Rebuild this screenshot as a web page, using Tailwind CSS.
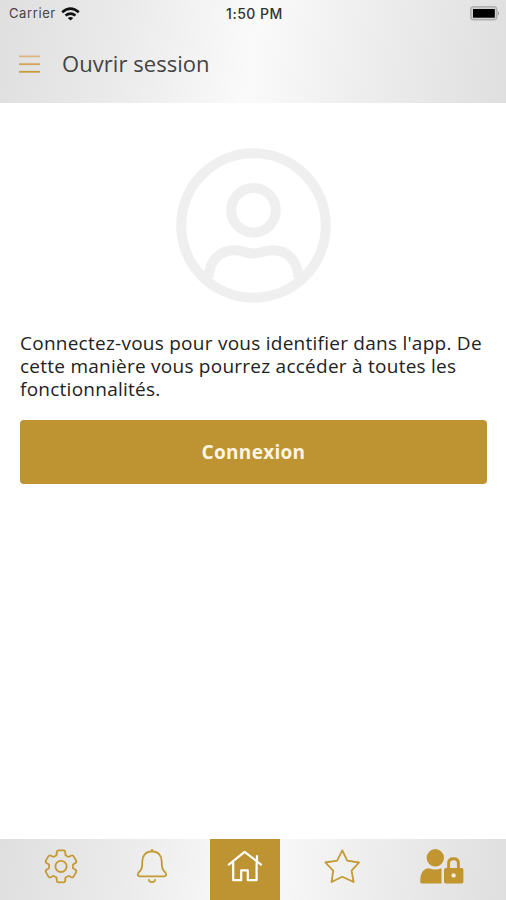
<!DOCTYPE html>
<html lang="fr">
  <head>
    <meta charset="UTF-8" />
    <meta name="viewport" content="width=device-width, initial-scale=1.0" />
    <title>Ouvrir session</title>
    <script src="https://cdn.jsdelivr.net/npm/@tailwindcss/browser@4"></script>
  </head>
  <body class="bg-white font-['Open_Sans',sans-serif] text-[#222]">
    <div class="flex flex-col w-[506px] h-[900px] overflow-hidden">
      <!-- Header -->
      <header class="h-[103px] shrink-0 bg-[linear-gradient(98deg,#dfdfdf_0%,#ebebeb_25%,#fafafa_50%,#ececec_75%,#dfdfdf_100%)]">
        <!-- Status bar -->
        <div class="grid grid-cols-3 items-center h-[27px] pl-[9px] pr-[6px] font-['Inter',sans-serif] text-[13px]">
          <div class="flex items-center gap-[5px] text-[#444]">
            <span class="tracking-[0.6px]">Carrier</span>
            <svg class="w-[19px] h-[14px]" viewBox="0 0 19 14" fill="none" stroke="#111" stroke-width="2.6">
              <path d="M1.2 5.2Q9.5 -1.9 17.8 5.2" />
              <path d="M4.5 8.6Q9.5 4.5 14.5 8.6" />
              <path d="M9.5 13.6L6.8 10.9Q9.5 8.9 12.2 10.9Z" fill="#111" stroke="none" />
            </svg>
          </div>
          <div class="text-center font-medium text-[14px] tracking-[0.5px] text-[#333] whitespace-nowrap">1:50 PM</div>
          <svg class="w-[30px] h-[15px] justify-self-end" viewBox="0 0 30 15">
            <rect x="0.8" y="0.8" width="26" height="13" rx="3" fill="#d0d0d0" stroke="#b0b0b0" stroke-width="1.5" />
            <rect x="3" y="3" width="21.8" height="8.7" fill="#000" />
            <path d="M28 5Q30 7.3 28 9.6Z" fill="#999" />
          </svg>
        </div>
        <!-- Title bar -->
        <div class="flex items-center h-[74px] pl-[18px] gap-[21px]">
          <svg class="w-[23px] h-[20px]" viewBox="0 0 23 20" fill="none" stroke-width="1.8">
            <path d="M1 2.4H22" stroke="#dcb580" />
            <path d="M1 10.2H22" stroke="#d3a455" />
            <path d="M1 17.8H22" stroke="#c99c3a" />
          </svg>
          <h1 class="pb-[3px] text-[22px] leading-none tracking-[0.05px] text-[#444] whitespace-nowrap">Ouvrir session</h1>
        </div>
      </header>

      <!-- Content -->
      <main class="flex-1 pl-5 pr-[19px]">
        <svg class="mx-auto mt-[45px] w-[156px] h-[156px]" viewBox="0.5 0.5 156 156" fill="none" stroke="#efefef" stroke-width="10">
          <circle cx="78" cy="78" r="72.3" />
          <circle cx="78" cy="62.7" r="22.3" />
          <path d="M33 130C34 114 43 102.8 59 102.8C68 102.8 68.5 106 78 106C87.5 106 88 102.8 97 102.8C113 102.8 122 114 123 130" />
        </svg>
        <p class="mt-[28px] text-[19px] leading-[23.2px] tracking-[0.25px] whitespace-nowrap">
          Connectez-vous pour vous identifier dans l'app. De<br />
          cette manière vous pourrez accéder à toutes les<br />
          fonctionnalités.
        </p>
        <button type="button" class="mt-[18px] block w-[467px] h-[64px] pt-[2px] rounded-[4px] bg-[#be9331] text-[19px] font-bold tracking-[0.3px] text-[#fdf5e4]">
          Connexion
        </button>
      </main>

      <!-- Tab bar -->
      <nav class="flex h-[61px] shrink-0 bg-[linear-gradient(98deg,#dfdfdf_0%,#ebebeb_25%,#fafafa_50%,#ececec_75%,#dfdfdf_100%)]">
        <a class="w-[121px] flex justify-center pt-[9px]">
          <svg class="w-[36px] h-[36px]" viewBox="-18 -18.4 36 36" fill="none" stroke="#c39a33" stroke-width="1.8" stroke-linejoin="round">
            <path id="tooth" d="M-6.2 -10.8Q-4.4 -10.2 -4.3 -12.3V-13.8Q-4.2 -16 -2.3 -16H2.3Q4.2 -16 4.3 -13.8V-12.3Q4.4 -10.2 6.2 -10.8" />
            <use href="#tooth" transform="rotate(60)" />
            <use href="#tooth" transform="rotate(120)" />
            <use href="#tooth" transform="rotate(180)" />
            <use href="#tooth" transform="rotate(240)" />
            <use href="#tooth" transform="rotate(300)" />
            <circle r="5.6" />
          </svg>
        </a>
        <a class="w-[89px] flex justify-center pt-[9px] pr-[27px]">
          <svg class="w-[36px] h-[37px] shrink-0" viewBox="0 0 36 37" fill="none" stroke="#c39a33" stroke-width="1.8" stroke-linecap="round">
            <path d="M18 3.4C11.5 3.4 8.3 8 8.3 13.5C8.3 21 7.3 21.5 4.4 25C3 27 4 28.3 6 28.3H30C32 28.3 33 27 31.6 25C28.7 21.5 27.7 21 27.7 13.5C27.7 8 24.5 3.4 18 3.4Z" />
            <path d="M18 2V3.4" stroke-width="2.2" />
            <path d="M14.9 32Q15.2 34.2 18 34.2Q20.8 34.2 21.1 32" />
          </svg>
        </a>
        <a class="w-[70px] flex justify-center pt-[9px] bg-[#be9331]">
          <svg class="w-[36px] h-[36px]" viewBox="0 0 36 36" fill="none" stroke="#fff" stroke-width="2.2" stroke-linejoin="round" stroke-linecap="round">
            <path d="M1.8 16.6L17.6 3.8L34 16.6" />
            <path d="M6.2 15V32.2H14.2V22.4H20.8V32.2H29.6V15" />
            <path d="M30 8V12.8" />
          </svg>
        </a>
        <a class="w-[124px] flex justify-center pt-[9px]">
          <svg class="w-[38px] h-[36px]" viewBox="0 0 38 36" fill="none" stroke="#c39a33" stroke-width="1.8" stroke-linejoin="round">
            <path d="M19.3 2.4L24.2 12.6L36 14.5L28.6 22.7L30.6 34L19.3 28.8L8.6 34L10.2 22.7L2.4 14.5L14.2 12.6Z" />
          </svg>
        </a>
        <a class="flex-1 flex justify-end pt-[9px] pr-[41px]">
          <svg class="w-[46px] h-[36px]" viewBox="0 0 46 36" fill="#c1952f">
            <circle cx="16.3" cy="9.8" r="8.7" />
            <path d="M1.2 33.4Q1.2 20.8 10 20.2Q16.3 23 22.5 20.2V35.6H3.2Q1.2 35.6 1.2 33.4Z" />
            <rect x="25" y="20" width="19.4" height="15.6" rx="1.8" />
            <path d="M29.6 21V15.3Q29.6 10.8 34.6 10.8Q39.4 10.8 39.4 15.3V21" fill="none" stroke="#c1952f" stroke-width="2.9" />
            <circle cx="34.6" cy="27.4" r="2.2" fill="#f3ecdd" />
          </svg>
        </a>
      </nav>
    </div>
  </body>
</html>
